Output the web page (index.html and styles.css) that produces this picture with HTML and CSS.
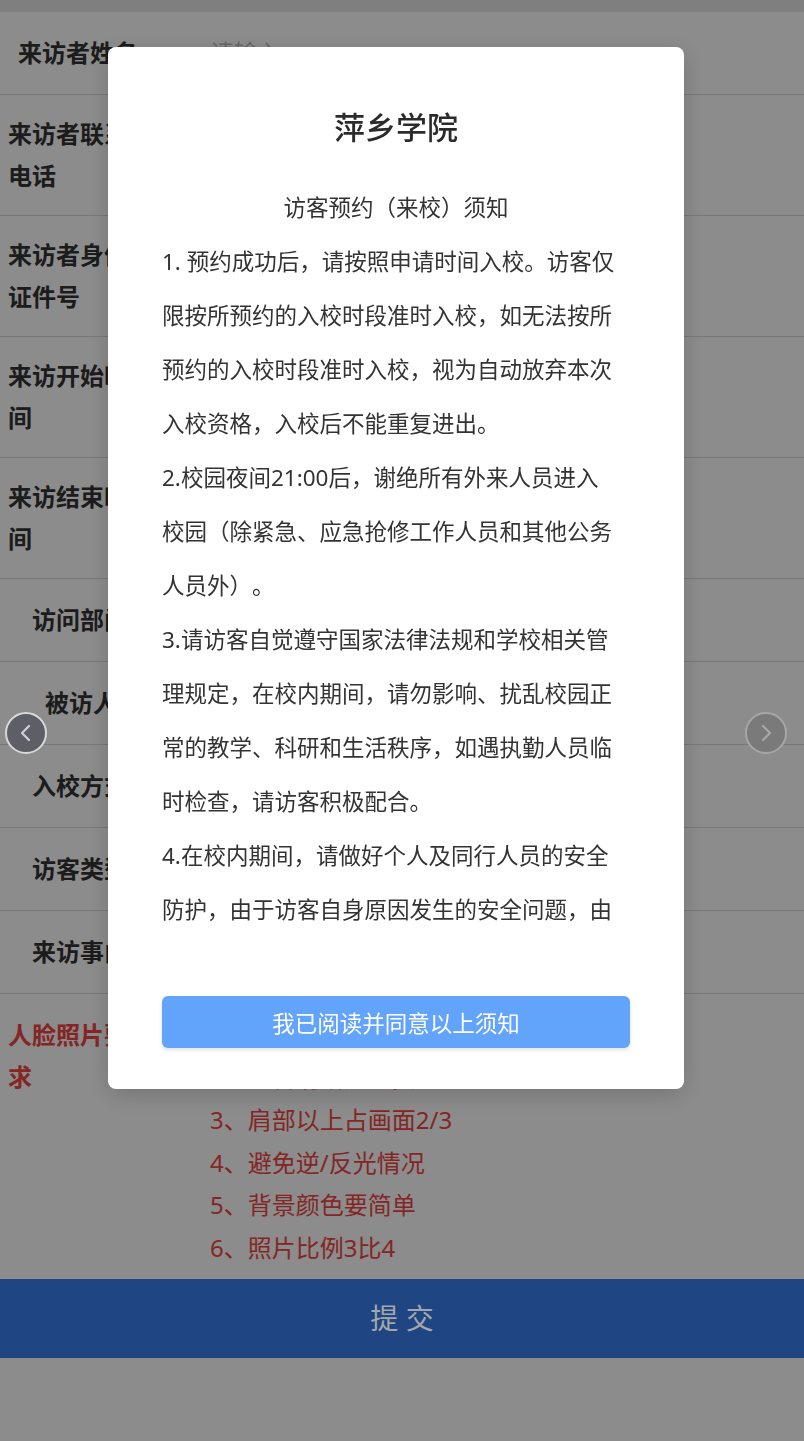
FILE: index.html
```html
<!DOCTYPE html>
<html lang="zh-CN">
<head>
  <meta charset="UTF-8">
  <meta name="viewport" content="width=device-width, initial-scale=1.0, user-scalable=no">
  <title>访客预约</title>
  <link rel="stylesheet" href="styles.css">
</head>
<body>
  <div class="page">
    <div class="topbar"></div>
    <div class="form">
      <div class="row">
        <div class="label first">来访者姓名</div>
        <div class="field"><span class="placeholder">请输入</span></div>
      </div>
      <div class="row tall">
        <div class="label">来访者联系电话</div>
        <div class="field"></div>
      </div>
      <div class="row tall">
        <div class="label">来访者身份证件号</div>
        <div class="field"></div>
      </div>
      <div class="row tall">
        <div class="label">来访开始时间</div>
        <div class="field"></div>
      </div>
      <div class="row tall">
        <div class="label">来访结束时间</div>
        <div class="field"></div>
      </div>
      <div class="row">
        <div class="label sub">访问部门</div>
        <div class="field"></div>
      </div>
      <div class="row">
        <div class="label sub2">被访人</div>
        <div class="field"></div>
      </div>
      <div class="row">
        <div class="label sub">入校方式</div>
        <div class="field"></div>
      </div>
      <div class="row">
        <div class="label sub">访客类型</div>
        <div class="field"></div>
      </div>
      <div class="row">
        <div class="label sub">来访事由</div>
        <div class="field"></div>
      </div>
      <div class="photo-row">
        <div class="label red">人脸照片要求</div>
        <ul class="rules">
          <li>1、本人近期正面免冠照片</li>
          <li>2、五官清晰无遮挡</li>
          <li>3、肩部以上占画面2/3</li>
          <li>4、避免逆/反光情况</li>
          <li>5、背景颜色要简单</li>
          <li>6、照片比例3比4</li>
          <li>7、最小3k，最大300K</li>
          <li>8、格式为jpg/png</li>
        </ul>
      </div>
    </div>
  </div>

  <div class="mask"></div>

  <div class="submit">提 交</div>

  <button class="swipe prev">
    <svg width="14" height="20" viewBox="0 0 14 20"><path d="M10 3 L3 10 L10 17" fill="none" stroke="currentColor" stroke-width="2.2" stroke-linecap="round" stroke-linejoin="round"/></svg>
  </button>
  <button class="swipe next">
    <svg width="14" height="20" viewBox="0 0 14 20"><path d="M4 3 L11 10 L4 17" fill="none" stroke="currentColor" stroke-width="2.2" stroke-linecap="round" stroke-linejoin="round"/></svg>
  </button>

  <div class="dialog">
    <div class="dialog-title">萍乡学院</div>
    <div class="dialog-body">
      <p class="notice-title">访客预约（来校）须知</p>
      <p>1. 预约成功后，请按照申请时间入校。访客仅限按所预约的入校时段准时入校，如无法按所预约的入校时段准时入校，视为自动放弃本次入校资格，入校后不能重复进出。</p>
      <p>2.校园夜间21:00后，谢绝所有外来人员进入校园（除紧急、应急抢修工作人员和其他公务人员外）。</p>
      <p>3.请访客自觉遵守国家法律法规和学校相关管理规定，在校内期间，请勿影响、扰乱校园正常的教学、科研和生活秩序，如遇执勤人员临时检查，请访客积极配合。</p>
      <p>4.在校内期间，请做好个人及同行人员的安全防护，由于访客自身原因发生的安全问题，由访客自行承担相应责任。</p>
    </div>
    <button class="agree-btn">我已阅读并同意以上须知</button>
  </div>
</body>
</html>
```

FILE: styles.css
```css
* { box-sizing: border-box; }
html, body {
  margin: 0;
  padding: 0;
  height: 100%;
  overflow: hidden;
  font-family: "Noto Sans", "Noto Sans CJK SC", sans-serif;
  color: #333;
  background: #fff;
  text-spacing-trim: space-all;
}
.topbar {
  height: 12px;
  background: #e8e8e8;
}
.row {
  display: flex;
  align-items: center;
  border-bottom: 1px solid #dcdcdc;
  padding: 20px 0;
}
.row.tall {
  padding: 18px 0;
}
.label {
  flex: 1;
  padding-left: 8px;
  font-size: 24px;
  line-height: 42px;
  font-weight: 700;
  color: #333;
}
.row .label {
  max-width: 128px;
}
.label.first { padding-left: 18px; max-width: 150px; }
.label.sub { padding-left: 32px; max-width: 180px; }
.label.sub2 { padding-left: 45px; max-width: 180px; }
.field {
  margin-left: auto;
  width: 594px;
  font-size: 24px;
  line-height: 42px;
}
.placeholder {
  color: #c0c0c0;
}
.photo-row {
  display: flex;
  padding-top: 20px;
}
.label.red {
  color: #f04545;
  max-width: 128px;
}
.rules {
  list-style: none;
  margin: 0 0 0 auto;
  padding: 0;
  width: 594px;
  color: #f04545;
  font-size: 24px;
  line-height: 42.6px;
}
.mask {
  position: fixed;
  top: 0;
  left: 0;
  right: 0;
  bottom: 0;
  background: rgba(0, 0, 0, 0.45);
  z-index: 10;
}
.submit {
  position: fixed;
  left: 0;
  right: 0;
  bottom: 83px;
  height: 79px;
  background: #1f4583;
  color: #a3a6ad;
  font-size: 28px;
  line-height: 79px;
  text-align: center;
  z-index: 11;
}
.swipe {
  position: fixed;
  top: 712px;
  width: 42px;
  height: 42px;
  border-radius: 50%;
  padding: 0;
  display: flex;
  align-items: center;
  justify-content: center;
  z-index: 11;
}
.swipe.prev {
  left: 5px;
  background: #5e5f66;
  border: 2px solid #d8d8d8;
  color: #d0d0d4;
}
.swipe.next {
  left: 745px;
  background: #7a7a7a;
  border: 2px solid #a6a6a6;
  color: #a8a8a8;
}
.dialog {
  position: fixed;
  top: 47px;
  left: 108px;
  width: 576px;
  height: 1042px;
  background: #fff;
  border-radius: 8px;
  box-shadow: 0 6px 24px rgba(0, 0, 0, 0.18);
  padding: 58px 54px 41px;
  z-index: 20;
  display: flex;
  flex-direction: column;
}
.dialog-title {
  text-align: center;
  font-size: 31px;
  line-height: 44px;
  font-weight: 500;
  color: #2b2b2b;
  margin-bottom: 32px;
}
.dialog-body {
  height: 756px;
  overflow: hidden;
  font-size: 22.5px;
  line-height: 54px;
  color: #333;
}
.dialog-body p {
  margin: 0;
  width: 455px;
}
.dialog-body .notice-title {
  width: auto;
  text-align: center;
}
.agree-btn {
  margin-top: 59px;
  height: 52px;
  border: none;
  border-radius: 6px;
  background: #62a3fc;
  color: #fff;
  font-family: "Noto Sans", "Noto Sans CJK SC", sans-serif;
  font-size: 22.5px;
  box-shadow: 0 2px 4px rgba(0, 0, 0, 0.12);
}
```
